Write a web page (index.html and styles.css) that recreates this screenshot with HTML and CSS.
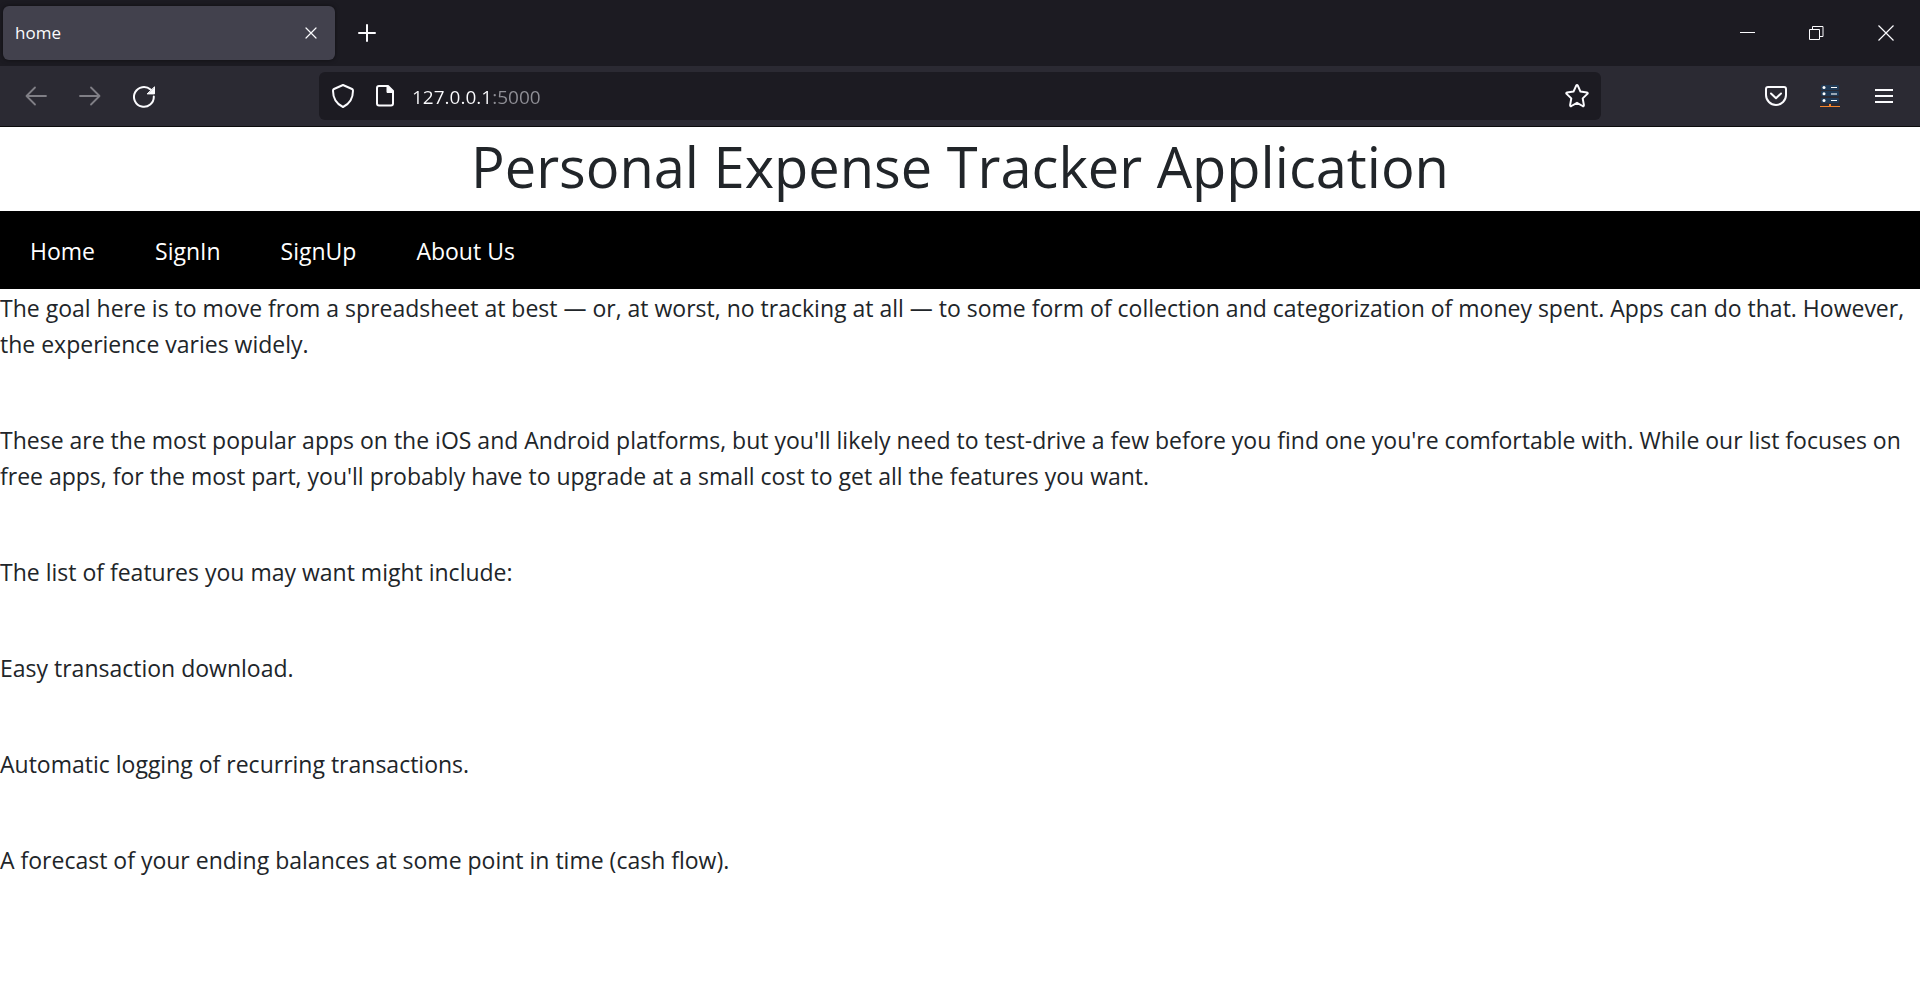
FILE: index.html
```html
<!DOCTYPE html>
<html lang="en">
<head>
<meta charset="utf-8">
<title>home</title>
<link rel="stylesheet" href="styles.css">
</head>
<body>
<div class="browser">
  <div class="tab-bar">
    <div class="tab">
      <span class="tab-title">home</span>
      <button class="tab-close" type="button" aria-label="Close tab">
        <svg width="12" height="12" viewBox="0 0 12 12" fill="none" stroke="currentColor" stroke-width="1.2" stroke-linecap="round"><path d="M1 1l10 10M11 1L1 11"/></svg>
      </button>
    </div>
    <button class="new-tab" type="button" aria-label="New tab">
      <svg width="18" height="18" viewBox="0 0 18 18" fill="none" stroke="currentColor" stroke-width="2" stroke-linecap="round"><path d="M9 1v16M1 9h16"/></svg>
    </button>
    <div class="window-controls">
      <button class="window-button" type="button" aria-label="Minimize">
        <svg width="15" height="16" viewBox="0 0 15 16" fill="none" stroke="currentColor"><path d="M0 7.500h15"/></svg>
      </button>
      <button class="window-button" type="button" aria-label="Restore">
        <svg width="15" height="15" viewBox="0 0 15 15" fill="none" stroke="currentColor"><path d="M.5 3.500h10v10H.5zM3.500 3.500V.5h10.500v10h-3.500"/></svg>
      </button>
      <button class="window-button" type="button" aria-label="Close">
        <svg width="16" height="16" viewBox="0 0 16 16" fill="none" stroke="currentColor" stroke-width="1.2"><path d="M.5.5l15 15M15.500.5l-15 15"/></svg>
      </button>
    </div>
  </div>
  <div class="toolbar">
    <div class="tool-group">
      <button class="tool" type="button" aria-label="Back" disabled>
        <svg width="22" height="20" viewBox="0 0 22 20" fill="none" stroke="currentColor" stroke-width="1.8" stroke-linecap="round" stroke-linejoin="round"><path d="M21 10H1.500M10 1.500L1.500 10l8.500 8.500"/></svg>
      </button>
      <button class="tool" type="button" aria-label="Forward" disabled>
        <svg width="22" height="20" viewBox="0 0 22 20" fill="none" stroke="currentColor" stroke-width="1.8" stroke-linecap="round" stroke-linejoin="round"><path d="M1 10h19.500M12 1.500l8.500 8.500-8.500 8.500"/></svg>
      </button>
      <button class="tool" type="button" aria-label="Reload">
        <svg width="22" height="24" viewBox="0 0 22 24" fill="none" stroke="currentColor" stroke-width="2" stroke-linecap="round"><path d="M20.800 12.500A9.900 9.900 0 1 1 17.600 5.600"/><path d="M21.500 3.200v6.700h-7z" fill="currentColor" stroke="currentColor" stroke-width="1" stroke-linejoin="round"/></svg>
      </button>
    </div>
    <div class="address">
      <button class="address-icon" type="button" aria-label="Tracking protection">
        <svg width="24" height="26" viewBox="0 0 24 26" fill="none" stroke="currentColor" stroke-width="2" stroke-linejoin="round"><path d="M12 2l9 4q1 .5 1 1.700c0 7-3.200 13-10 16.300C5.200 20.700 2 14.700 2 7.700Q2 6.500 3 6z"/></svg>
      </button>
      <button class="address-icon" type="button" aria-label="Site information">
        <svg width="20" height="22" viewBox="0 0 20 22" fill="none" stroke="currentColor" stroke-width="2" stroke-linejoin="round"><path d="M4 1h9l5 5v12.500a2 2 0 0 1-2 2H4a2 2 0 0 1-2-2V3a2 2 0 0 1 2-2z"/><path d="M12 1v6.500h6.500z" fill="currentColor" stroke-width="1"/></svg>
      </button>
      <input class="address-input" type="text" value="127.0.0.1:5000" aria-label="Address">
      <button class="address-icon" type="button" aria-label="Bookmark this page">
        <svg width="24" height="24" viewBox="0 0 24 24" fill="none" stroke="currentColor" stroke-width="2" stroke-linejoin="round"><path d="M11.200 1.600q.8-1.200 1.600 0l2.700 6 6.400.8q1.400.4.5 1.500l-4.700 4.500 1.200 6.700q0 1.500-1.300.9L12 18.800 6.400 22q-1.300.6-1.300-.9l1.200-6.700L1.600 9.900q-.9-1.100.5-1.500l6.400-.8z"/></svg>
      </button>
    </div>
    <div class="tool-group">
      <button class="tool" type="button" aria-label="Save to Pocket">
        <svg width="22" height="20" viewBox="0 0 22 20" fill="none" stroke="currentColor" stroke-width="2" stroke-linecap="round" stroke-linejoin="round"><path d="M3 1h16a2 2 0 0 1 2 2v6a10 10 0 0 1-20 0V3a2 2 0 0 1 2-2zM6 7.500l5 4.800 5-4.800"/></svg>
      </button>
      <button class="tool" type="button" aria-label="Extension">
        <svg width="22" height="24" viewBox="0 0 22 24"><g fill="#203a56"><rect x="2" y="1" width="18" height="5" rx="1"/><rect x="2" y="7" width="18" height="5" rx="1"/><rect x="2" y="14" width="18" height="5" rx="1"/></g><g fill="#fff"><circle cx="5" cy="3.500" r="1.500"/><circle cx="5" cy="9.800" r="1.500"/><circle cx="5" cy="16.500" r="1.500"/><path d="M12 3h6v1h-6zM12 16h6v1h-6z"/></g><path fill="#9aa7b4" d="M12 9h6v2h-6z"/><path fill="#f5842b" d="M1 22h9v-2h2v2h9v1H1z"/></svg>
      </button>
      <button class="tool" type="button" aria-label="Open menu">
        <svg width="18" height="18" viewBox="0 0 18 18" fill="none" stroke="currentColor" stroke-width="2"><path d="M0 3h18M0 9h18M0 15h18"/></svg>
      </button>
    </div>
  </div>
</div>
<header>
  <h1 class="page-title">Personal Expense Tracker Application</h1>
  <nav class="site-nav">
    <a class="nav-link" href="#home">Home</a>
    <a class="nav-link" href="#signin">SignIn</a>
    <a class="nav-link" href="#signup">SignUp</a>
    <a class="nav-link" href="#about">About Us</a>
  </nav>
</header>
<main class="content">
  <p>The goal here is to move from a spreadsheet at best — or, at worst, no tracking at all — to some form of collection and categorization of money spent. Apps can do that. However, the experience varies widely.</p>
  <p>These are the most popular apps on the iOS and Android platforms, but you'll likely need to test-drive a few before you find one you're comfortable with. While our list focuses on free apps, for the most part, you'll probably have to upgrade at a small cost to get all the features you want.</p>
  <p>The list of features you may want might include:</p>
  <p>Easy transaction download.</p>
  <p>Automatic logging of recurring transactions.</p>
  <p>A forecast of your ending balances at some point in time (cash flow).</p>
</main>
</body>
</html>
```
FILE: styles.css
```css
* {
  box-sizing: border-box;
}

body {
  margin: 0;
  background: #fff;
  color: #212529;
  font-family: "Segoe UI", "Open Sans", "Noto Sans", sans-serif;
  font-size: 23px;
  line-height: 36px;
}

button {
  display: flex;
  align-items: center;
  justify-content: center;
  padding: 0;
  border: 0;
  background: none;
  color: inherit;
}

.browser {
  border-bottom: 1px solid #0c0c0d;
  color: #fbfbfe;
}

.tab-bar {
  display: flex;
  align-items: center;
  height: 66px;
  padding-left: 3px;
  background: #1c1b22;
}

.tab {
  display: flex;
  align-items: center;
  justify-content: space-between;
  width: 332px;
  height: 54px;
  padding: 0 6px 0 12px;
  border-radius: 6px;
  background: #42414d;
  box-shadow: 0 0 4px rgba(0, 0, 0, 0.5);
}

.tab-title {
  font-size: 17px;
}

.tab-close {
  width: 36px;
  height: 36px;
}

.new-tab {
  width: 54px;
  height: 54px;
  margin-left: 5px;
}

.window-controls {
  display: flex;
  align-self: stretch;
  margin-left: auto;
}

.window-button {
  width: 69px;
}

.toolbar {
  display: flex;
  align-items: center;
  height: 60px;
  padding: 0 9px;
  background: #2b2a33;
}

.tool-group {
  display: flex;
}

.tool {
  width: 54px;
  height: 54px;
}

.tool:disabled {
  color: #807f86;
}

.address {
  display: flex;
  flex: 1;
  align-items: center;
  height: 48px;
  margin: 0 148px;
  padding: 0 3px;
  border-radius: 6px;
  background: #1c1b22;
}

.address-icon {
  width: 42px;
  height: 42px;
}

/* The host is bright and the port that follows it is dimmed. */
.address-input {
  flex: 1;
  min-width: 0;
  height: 42px;
  padding: 2px 0 0 6px;
  border: 0;
  outline: 0;
  background: linear-gradient(to right, #fbfbfe 85px, #8f8f96 85px) text;
  color: transparent;
  font: inherit;
  font-size: 19px;
}

.page-title {
  margin: 0;
  padding: 3px 0 9px;
  font-size: 56px;
  font-weight: 400;
  line-height: 72px;
  text-align: center;
}

.site-nav {
  display: flex;
  background: #000;
}

.nav-link {
  padding: 22px 30px 20px;
  color: #fff;
  text-decoration: none;
}

.content {
  padding-top: 1px;
}

.content p {
  margin: 0 0 60px;
}
```
